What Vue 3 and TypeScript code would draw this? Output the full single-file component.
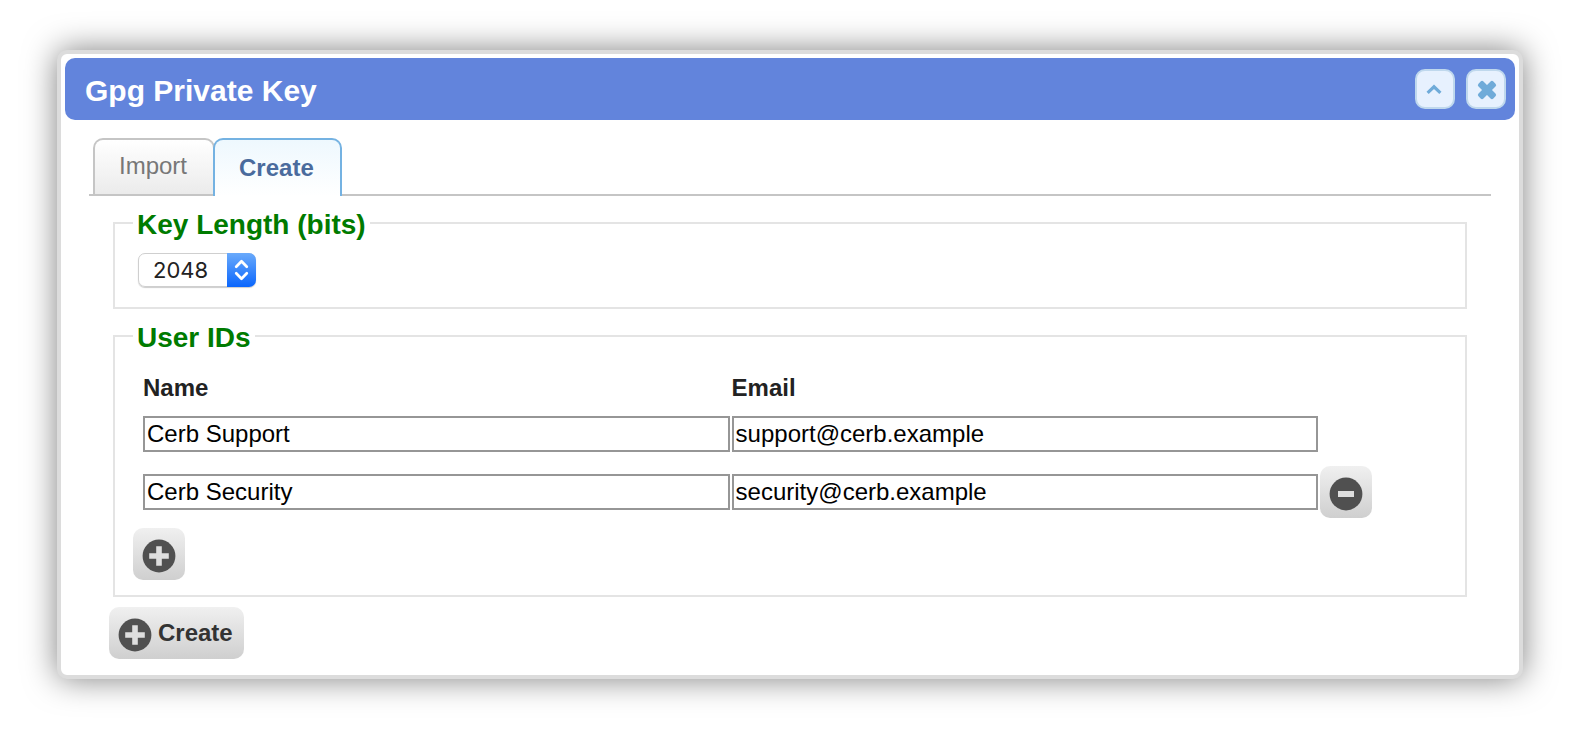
<script setup lang="ts">
import { ref } from 'vue'

interface UserId {
  id: number
  name: string
  email: string
}

const tabs = ['Import', 'Create']
const activeTab = ref('Create')
const keyLength = ref('2048')
const users = ref<UserId[]>([
  { id: 1, name: 'Cerb Support', email: 'support@cerb.example' },
  { id: 2, name: 'Cerb Security', email: 'security@cerb.example' },
])
let nextId = 3

function addUser() {
  users.value.push({ id: nextId++, name: '', email: '' })
}

function removeUser(id: number) {
  users.value = users.value.filter((u) => u.id !== id)
}
</script>

<template>
  <main class="page">
    <section class="dialog" role="dialog" aria-labelledby="dialog-title">
      <header class="titlebar">
        <h1 id="dialog-title" class="title">Gpg Private Key</h1>
        <button type="button" class="tool" aria-label="Minimize">
          <svg width="36" height="36" viewBox="0 0 36 36" aria-hidden="true">
            <path d="M10.6 21.8 L17 15.8 L23.4 21.8" fill="none" stroke="#6fabd9" stroke-width="3.2" />
          </svg>
        </button>
        <button type="button" class="tool" aria-label="Close">
          <svg width="36" height="36" viewBox="0 0 36 36" aria-hidden="true">
            <g fill="#6fabd9">
              <rect x="8.5" y="15.5" width="21" height="7" rx="2" transform="rotate(45 19 19)" />
              <rect x="8.5" y="15.5" width="21" height="7" rx="2" transform="rotate(-45 19 19)" />
            </g>
          </svg>
        </button>
      </header>

      <div class="content">
        <div class="tabs" role="tablist">
          <button
            v-for="tab in tabs"
            :key="tab"
            type="button"
            role="tab"
            class="tab"
            :class="{ active: tab === activeTab }"
            :aria-selected="tab === activeTab"
            @click="activeTab = tab"
          >{{ tab }}</button>
        </div>

        <form class="panel" @submit.prevent>
          <fieldset class="group">
            <legend>Key Length (bits)</legend>
            <div class="select">
              <select v-model="keyLength" aria-label="Key Length (bits)">
                <option>1024</option>
                <option>2048</option>
                <option>4096</option>
              </select>
              <span class="arrows">
                <svg width="29" height="34" viewBox="0 0 29 34" aria-hidden="true">
                  <path d="M9.2 13.8 L14.5 8.3 L19.8 13.8 M9.2 20.2 L14.5 25.7 L19.8 20.2" fill="none" stroke="#fff" stroke-width="2.7" stroke-linecap="round" stroke-linejoin="round" />
                </svg>
              </span>
            </div>
          </fieldset>

          <fieldset class="group">
            <legend>User IDs</legend>
            <table class="users">
              <thead>
                <tr>
                  <th scope="col" class="field">Name</th>
                  <th scope="col" class="field">Email</th>
                  <td></td>
                </tr>
              </thead>
              <tbody>
                <tr v-for="(user, index) in users" :key="user.id">
                  <td><input v-model="user.name" type="text" aria-label="Name" /></td>
                  <td><input v-model="user.email" type="text" aria-label="Email" /></td>
                  <td>
                    <button v-if="index > 0" type="button" class="btn" aria-label="Remove" @click="removeUser(user.id)">
                      <svg width="34" height="38" viewBox="0 0 34 38" aria-hidden="true">
                        <circle cx="17" cy="21" r="16.4" fill="#505050" />
                        <rect x="9" y="18" width="16" height="6" fill="#dedede" />
                      </svg>
                    </button>
                  </td>
                </tr>
              </tbody>
            </table>
            <button type="button" class="btn add" aria-label="Add" @click="addUser">
              <svg width="34" height="38" viewBox="0 0 34 38" aria-hidden="true">
                <circle cx="17" cy="21" r="16.4" fill="#505050" />
                <path d="M14.2 11.2h5.6v7h7v5.6h-7v7h-5.6v-7h-7v-5.6h7z" fill="#dedede" />
              </svg>
            </button>
          </fieldset>

          <button type="submit" class="btn create">
            <svg width="34" height="38" viewBox="0 0 34 38" aria-hidden="true">
              <circle cx="17" cy="21" r="16.4" fill="#505050" />
              <path d="M14.2 11.2h5.6v7h7v5.6h-7v7h-5.6v-7h-7v-5.6h7z" fill="#dedede" />
            </svg>
            <span>Create</span>
          </button>
        </form>
      </div>
    </section>
  </main>
</template>

<style>
body {
  margin: 0;
  background: #fff;
}
</style>

<style scoped>
* {
  box-sizing: border-box;
}

.page {
  padding: 50px 51px 57px 57px;
  font-family: "Liberation Sans", Arial, sans-serif;
  font-size: 24px;
  line-height: 28px;
  color: #222;
}

button,
input {
  font: inherit;
}

button {
  margin: 0;
  cursor: pointer;
}

.dialog {
  padding: 4px;
  border: 4px solid #dcdcdc;
  border-radius: 10px;
  background: #fff;
  box-shadow: 0 0 32px rgba(0, 0, 0, 0.5);
}

.titlebar {
  display: flex;
  align-items: center;
  gap: 11px;
  height: 62px;
  padding: 0 9px 0 20px;
  border-radius: 10px;
  background: #6284dc;
}

.title {
  flex: 1;
  margin: 0;
  padding-top: 4px;
  font-size: 30px;
  line-height: 36px;
  font-weight: bold;
  color: #fff;
}

.tool {
  width: 40px;
  height: 40px;
  padding: 0;
  border: 2px solid #bfd8ed;
  border-radius: 10px;
  background: #e7f1fe;
}

.tool svg {
  display: block;
}

.content {
  padding: 18px 24px 12px;
}

.tabs {
  display: flex;
  align-items: flex-start;
  height: 58px;
  padding: 0 4px;
  border-bottom: 2px solid #c5c5c5;
}

.tab {
  height: 56px;
  padding: 0 26px 2px 24px;
  border: 2px solid #c5c5c5;
  border-bottom: 0;
  border-radius: 10px 10px 0 0;
  background: linear-gradient(#fff, #ebebeb);
  color: #777;
}

.tab.active {
  height: 58px;
  margin-left: -2px;
  padding-bottom: 0;
  border-color: #74b2e2;
  background: linear-gradient(#eef8fe, #fff);
  color: #4a6b9d;
  font-weight: bold;
}

.panel {
  padding: 0 20px;
}

.group {
  min-width: 0;
  margin: 11px 4px 0;
  padding: 14px 14px 15px 18px;
  border: 2px solid #e4e4e4;
}

.group legend {
  padding: 4px 4px 0;
  font-size: 28px;
  line-height: 28px;
  font-weight: bold;
  color: #007b00;
}

.select {
  position: relative;
  width: 118px;
  height: 34px;
  margin: 0 5px 5px;
  border-radius: 7px;
  box-shadow: 0 1px 1px rgba(0, 0, 0, 0.2);
}

.select select {
  width: 100%;
  height: 100%;
  padding: 0 30px 0 14px;
  border: 1px solid #cfcfcf;
  border-radius: 7px;
  appearance: none;
  background: #fff;
  color: #222;
  font-family: Inter, sans-serif;
  font-size: 22px;
}

.arrows {
  position: absolute;
  top: 0;
  right: 0;
  width: 29px;
  height: 34px;
  border-radius: 0 7px 7px 0;
  background: linear-gradient(#6aaafb, #0a66fd);
  pointer-events: none;
}

.arrows svg {
  display: block;
}

.users {
  width: calc(100% - 10px);
  margin: 5px 0 0 10px;
  border-collapse: collapse;
  table-layout: fixed;
}

.users th {
  height: 34px;
  padding: 0;
  text-align: left;
}

.field {
  width: 45%;
}

.users tbody td {
  height: 58px;
  padding: 0 2px 0 0;
  vertical-align: middle;
}

.users input {
  display: block;
  width: 100%;
  height: 36px;
  padding: 0 2px;
  border: 2px solid #969696;
  border-radius: 0;
  background: #fff;
  color: #000;
}

.btn {
  display: flex;
  align-items: center;
  gap: 6px;
  height: 52px;
  padding: 0 9px;
  border: 0;
  border-radius: 10px;
  background: linear-gradient(#f0f0f0, #cfcfcf);
  color: #333;
  font-weight: bold;
}

.add {
  margin-top: 7px;
}

.create {
  margin-top: 10px;
  padding-right: 11px;
}
</style>
